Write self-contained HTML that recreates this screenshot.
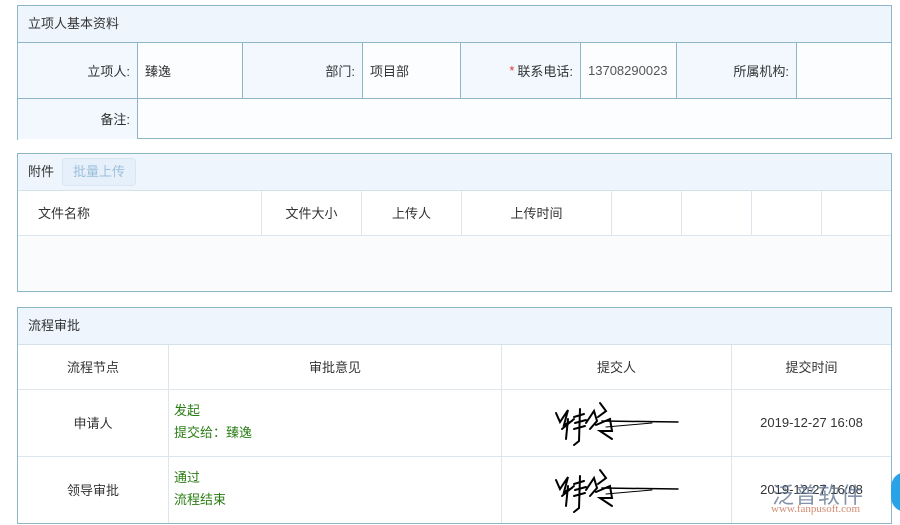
<!DOCTYPE html>
<html><head><meta charset="utf-8"><style>
*{margin:0;padding:0;box-sizing:border-box}
body{width:900px;height:525px;background:#fff;position:relative;overflow:hidden;font-family:"Liberation Sans","Noto Sans CJK SC",sans-serif;font-size:13px;color:#333}
.b{position:absolute}
.sec{position:absolute;left:17px;width:875px;border:1px solid #8fb6c6;background:#fbfdff}
.hd{position:absolute;left:0;right:0;top:0;height:37px;background:#eef5fd;border-bottom:1px solid #d4e2ea;padding-left:10px;line-height:35px}
.c{position:absolute;display:flex;align-items:center;padding-bottom:2px}
.lab{background:#f2f8fd;justify-content:flex-end;padding-right:8px}
.g{border-left:1px solid #dde6ec}
.ctr{justify-content:center}
.gr{color:#2a7d14;line-height:22px}
.vln{position:absolute;width:1px;background:#8fb6c6}
.hln{position:absolute;height:1px;background:#8fb6c6;left:0;right:0}
</style></head><body>
<!-- section 1 -->
<div class="sec" style="top:5px;height:134px">
 <div class="hd" style="border-bottom-color:#8fb6c6">立项人基本资料</div>
 <div class="c lab" style="left:0;top:37px;width:120px;height:56px">立项人:</div>
 <div class="c" style="left:120px;top:37px;width:105px;height:56px;padding-left:7px">臻逸</div>
 <div class="c lab" style="left:225px;top:37px;width:120px;height:56px">部门:</div>
 <div class="c" style="left:345px;top:37px;width:98px;height:56px;padding-left:7px">项目部</div>
 <div class="c lab" style="left:443px;top:37px;width:120px;height:56px"><span style="color:#d33;margin-right:3px">*</span>联系电话:</div>
 <div class="c" style="left:563px;top:37px;width:96px;height:56px;padding-left:7px;line-height:17px;color:#555;word-break:break-all">13708290023</div>
 <div class="c lab" style="left:659px;top:37px;width:120px;height:56px">所属机构:</div>
 <div class="c lab" style="left:0;top:93px;width:120px;height:40px">备注:</div>
 <div class="hln" style="top:92px"></div>
 <div class="vln" style="left:-1px;top:-1px;height:135px"></div>
 <div class="vln" style="left:119px;top:37px;height:96px"></div>
 <div class="vln" style="left:224px;top:37px;height:56px"></div>
 <div class="vln" style="left:344px;top:37px;height:56px"></div>
 <div class="vln" style="left:442px;top:37px;height:56px"></div>
 <div class="vln" style="left:562px;top:37px;height:56px"></div>
 <div class="vln" style="left:658px;top:37px;height:56px"></div>
 <div class="vln" style="left:778px;top:37px;height:56px"></div>
</div>
<!-- section 2 -->
<div class="sec" style="top:153px;height:139px;background:#fafbfc">
 <div class="hd">附件<span style="position:absolute;left:44px;top:4px;width:74px;height:28px;line-height:26px;border:1px solid #d8e6f2;border-radius:4px;background:#e6f0fa;color:#9cbfdc;text-align:center">批量上传</span></div>
 <div class="b" style="left:0;right:0;top:37px;height:45px;background:#fff;border-bottom:1px solid #dde6ec"></div>
 <div class="c" style="left:0;top:37px;width:244px;height:45px;padding-left:20px">文件名称</div>
 <div class="c g ctr" style="left:243px;top:37px;width:100px;height:45px">文件大小</div>
 <div class="c g ctr" style="left:343px;top:37px;width:100px;height:45px">上传人</div>
 <div class="c g ctr" style="left:443px;top:37px;width:150px;height:45px">上传时间</div>
 <div class="c g" style="left:593px;top:37px;width:70px;height:45px"></div>
 <div class="c g" style="left:663px;top:37px;width:70px;height:45px"></div>
 <div class="c g" style="left:733px;top:37px;width:70px;height:45px"></div>
 <div class="c g" style="left:803px;top:37px;width:70px;height:45px"></div>
</div>
<!-- section 3 -->
<div class="sec" style="top:307px;height:217px;background:#fff">
 <div class="hd">流程审批</div>
 <div class="b" style="left:0;right:0;top:81px;border-top:1px solid #dde6ec"></div>
 <div class="b" style="left:0;right:0;top:148px;border-top:1px solid #dde6ec"></div>
 <div class="c ctr" style="left:0;top:37px;width:150px;height:44px">流程节点</div>
 <div class="c g ctr" style="left:150px;top:37px;width:333px;height:44px">审批意见</div>
 <div class="c g ctr" style="left:483px;top:37px;width:230px;height:44px">提交人</div>
 <div class="c g ctr" style="left:713px;top:37px;width:160px;height:44px">提交时间</div>
 <div class="c ctr" style="left:0;top:82px;width:150px;height:66px">申请人</div>
 <div class="c g" style="left:150px;top:82px;width:333px;height:66px;padding-left:5px"><div class="gr">发起<br>提交给：臻逸</div></div>
 <div class="c g ctr" style="left:483px;top:82px;width:230px;height:66px"><svg width="230" height="66"><g fill="none" stroke="#000" stroke-width="2" stroke-linecap="round"><path d="M54 24 L58 33 L66 21 L62 36 L70 32 M60 40 L72 30 M66 30 L64 50"/><path d="M72 28 L82 25 M73 34 L84 31 M72 40 L83 37 M78 20 L77 52 L72 56"/><path d="M84 34 L92 22 L95 32 L88 40 M98 14 L104 22 L96 28 M94 36 L108 30 L110 42 L98 42 L110 50"/><path d="M100 32 L176 33" stroke-width="1.5"/><path d="M104 38 L150 34" stroke-width="1"/></g></svg></div>
 <div class="c g ctr" style="left:713px;top:82px;width:160px;height:66px">2019-12-27 16:08</div>
 <div class="c ctr" style="left:0;top:149px;width:150px;height:66px">领导审批</div>
 <div class="c g" style="left:150px;top:149px;width:333px;height:66px;padding-left:5px"><div class="gr">通过<br>流程结束</div></div>
 <div class="c g ctr" style="left:483px;top:149px;width:230px;height:66px"><svg width="230" height="66"><g fill="none" stroke="#000" stroke-width="2" stroke-linecap="round"><path d="M54 24 L58 33 L66 21 L62 36 L70 32 M60 40 L72 30 M66 30 L64 50"/><path d="M72 28 L82 25 M73 34 L84 31 M72 40 L83 37 M78 20 L77 52 L72 56"/><path d="M84 34 L92 22 L95 32 L88 40 M98 14 L104 22 L96 28 M94 36 L108 30 L110 42 L98 42 L110 50"/><path d="M100 32 L176 33" stroke-width="1.5"/><path d="M104 38 L150 34" stroke-width="1"/></g></svg></div>
 <div class="c g ctr" style="left:713px;top:149px;width:160px;height:66px">2019-12-27 16:08</div>
</div>
<!-- watermark -->
<div class="b" style="left:772px;top:478px;font-size:22px;color:rgba(90,110,140,.75);letter-spacing:1px">泛普软件</div>
<div class="b" style="left:771px;top:503px;font-size:11px;color:rgba(200,110,80,.8);font-family:'Liberation Serif',serif">www.fanpusoft.com</div>
<div class="b" style="left:891px;top:472px;width:30px;height:40px;border-radius:20px;background:#29a3e8"></div>
</body></html>
